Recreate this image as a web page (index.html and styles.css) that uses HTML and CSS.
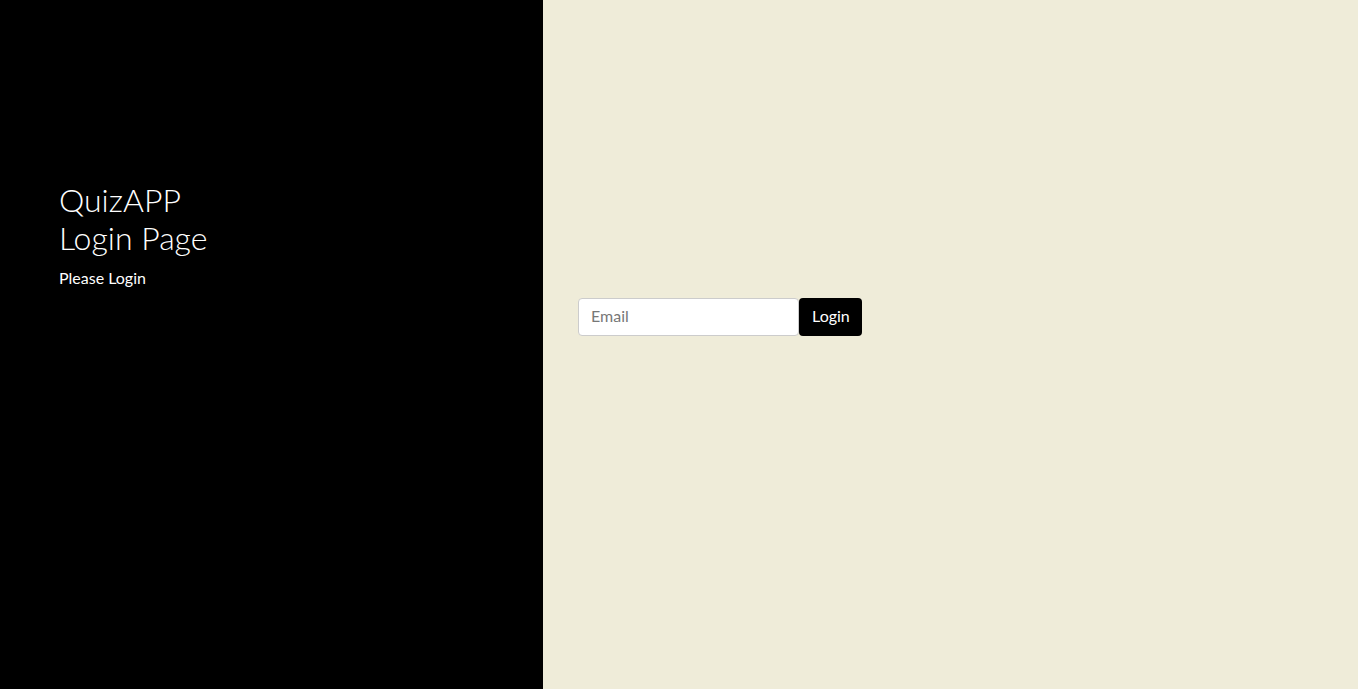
FILE: index.html
```html
<!DOCTYPE html>
<html>
<head>
<meta charset="utf-8">
<link rel="stylesheet" href="styles.css">
</head>
<body>
<div class="page">
  <div class="left">
    <h1 class="title">QuizAPP<br>Login Page</h1>
    <p class="sub">Please Login</p>
  </div>
  <div class="right">
    <form class="form">
      <input class="email" type="email" placeholder="Email">
      <button class="btn" type="button">Login</button>
    </form>
  </div>
</div>
</body>
</html>
```

FILE: styles.css
```css
html, body { margin: 0; padding: 0; height: 100%; }
body { font-family: Lato, "Noto Sans", sans-serif; }
.page { display: flex; height: 689px; }
.left { width: 543px; background: #000; color: #fff; padding: 181px 0 0 59px; box-sizing: border-box; }
.title { margin: 0; font-weight: 300; font-size: 32px; line-height: 38px; }
.sub { margin: 9px 0 0; font-size: 16px; line-height: 24px; }
.right { flex: 1; background: #efecd9; padding: 298px 0 0 35px; box-sizing: border-box; }
.form { display: flex; }
.email { width: 221px; height: 38px; box-sizing: border-box; border: 1px solid #ccc; border-radius: 4px; padding: 0 12px 4px; font-family: Lato, sans-serif; font-size: 16px; color: #333; background: #fff; outline: none; }
.email::placeholder { color: #777; }
.btn { height: 38px; padding: 0 12px 4px 13px; background: #000; color: #fff; border: none; border-radius: 4px; font-family: Lato, sans-serif; font-size: 16px; }
```
